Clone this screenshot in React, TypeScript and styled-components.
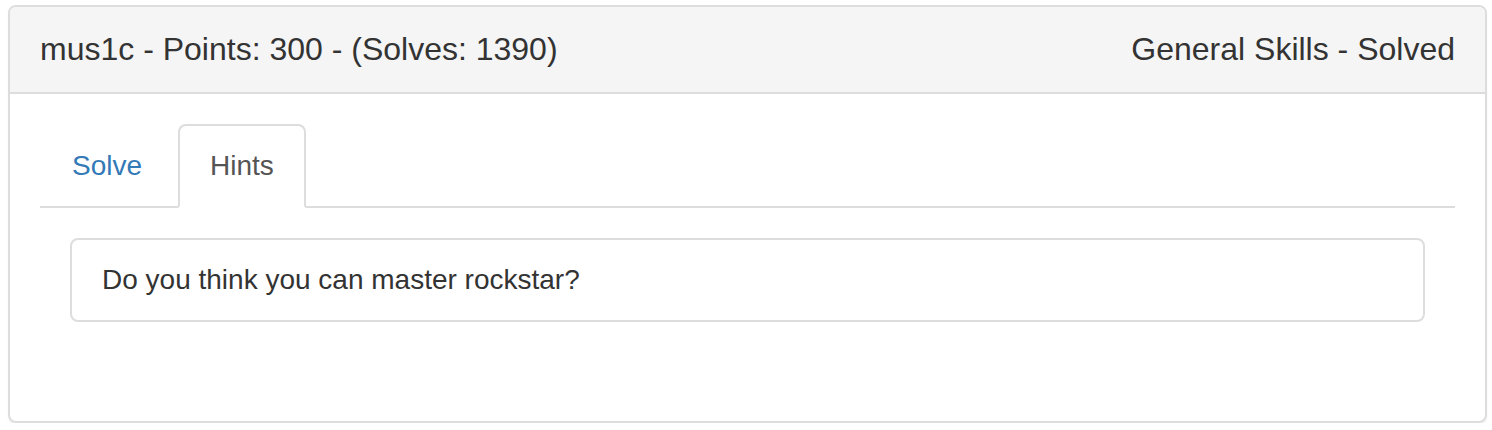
import React, { useState } from 'react';
import styled, { createGlobalStyle } from 'styled-components';

/* --------------------------------- styles --------------------------------- */

const GlobalStyle = createGlobalStyle`
  html, body {
    margin: 0;
    padding: 0;
    background: #fff;
  }

  body {
    font-family: 'Liberation Sans', Arial, Helvetica, sans-serif;
    color: #333;
  }
`;

const Page = styled.div`
  padding: 5px 5px 0 8px;
`;

const Panel = styled.div`
  width: 1479px;
  box-sizing: border-box;
  border: 2px solid #ddd;
  border-radius: 8px;
  background: #fff;
  box-shadow: 0 2px 2px rgba(0, 0, 0, 0.05);
  overflow: hidden;
`;

const PanelHeading = styled.div`
  display: flex;
  justify-content: space-between;
  align-items: center;
  padding: 25px 30px;
  background: #f5f5f5;
  border-bottom: 2px solid #ddd;
  font-size: 32px;
  line-height: 35px;
  color: #333;
`;

const PanelTitle = styled.h3`
  margin: 0;
  font-size: inherit;
  font-weight: normal;
  line-height: inherit;
`;

const PanelBody = styled.div`
  padding: 30px 30px 30px;
`;

const Tabs = styled.ul`
  display: flex;
  margin: 0;
  padding: 0;
  list-style: none;
  border-bottom: 2px solid #ddd;
`;

const TabItem = styled.li<{ $active?: boolean }>`
  margin: 0 4px -2px 0;
  padding: 20px 30px;
  font-size: 28px;
  line-height: 40px;
  border: 2px solid ${({ $active }) => ($active ? '#ddd' : 'transparent')};
  border-bottom-color: ${({ $active }) => ($active ? '#fff' : 'transparent')};
  border-radius: 8px 8px 0 0;
  background: ${({ $active }) => ($active ? '#fff' : 'transparent')};
  color: ${({ $active }) => ($active ? '#555' : '#337ab7')};
  cursor: ${({ $active }) => ($active ? 'default' : 'pointer')};
`;

const TabContent = styled.div`
  padding: 30px 30px 69px;
`;

const HintBox = styled.div`
  padding: 20px 30px;
  border: 2px solid #ddd;
  border-radius: 8px;
  font-size: 28px;
  line-height: 40px;
  color: #333;
`;

/* -------------------------------- component ------------------------------- */

const tabs = ['Solve', 'Hints'];

const App = (): JSX.Element => {
  const [active, setActive] = useState('Hints');

  return (
    <Page>
      <GlobalStyle />
      <Panel>
        <PanelHeading>
          <PanelTitle>mus1c - Points: 300 - (Solves: 1390)</PanelTitle>
          <PanelTitle>General Skills - Solved</PanelTitle>
        </PanelHeading>
        <PanelBody>
          <Tabs>
            {tabs.map((t) => (
              <TabItem key={t} $active={active === t} onClick={() => setActive(t)}>
                {t}
              </TabItem>
            ))}
          </Tabs>
          <TabContent>
            {active === 'Hints' ? (
              <HintBox>Do you think you can master rockstar?</HintBox>
            ) : (
              <HintBox>Submit your flag here.</HintBox>
            )}
          </TabContent>
        </PanelBody>
      </Panel>
    </Page>
  );
};

export default App;
